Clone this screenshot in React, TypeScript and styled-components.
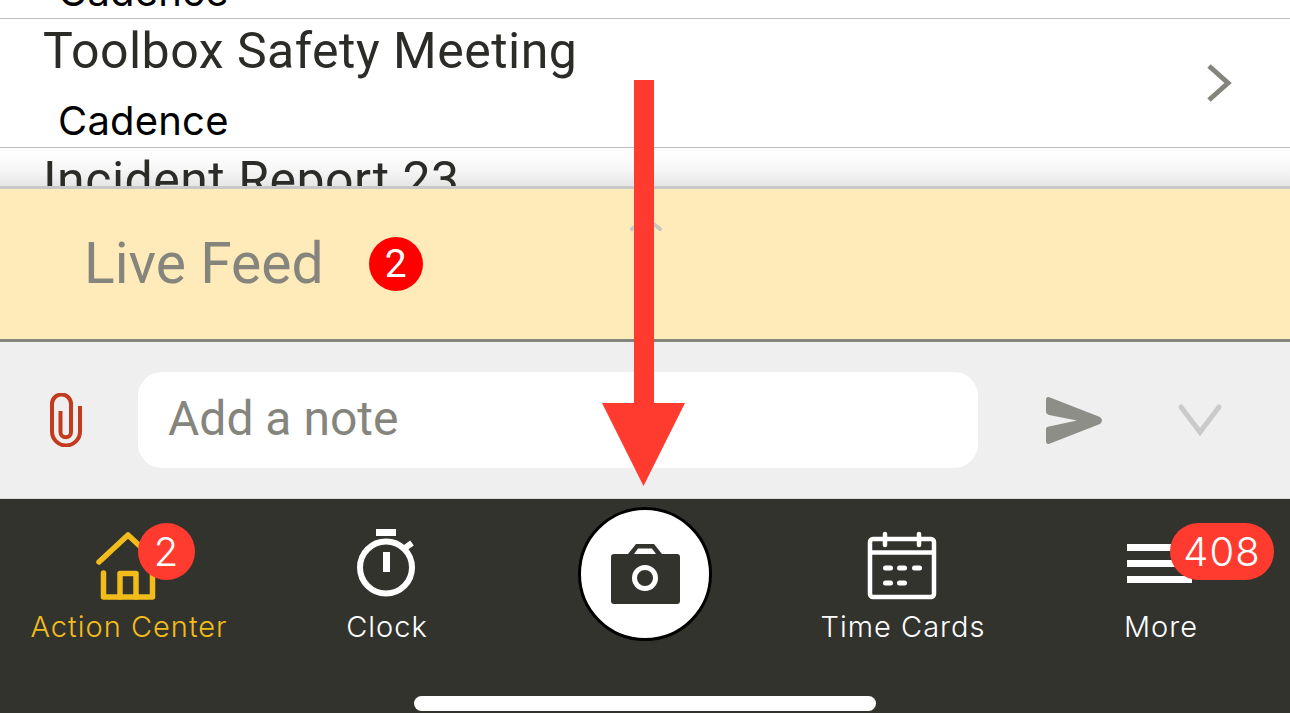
import styled, { createGlobalStyle } from "styled-components";
import type { ReactNode } from "react";

const GlobalStyle = createGlobalStyle`
  html, body {
    margin: 0;
    padding: 0;
    background: #fff;
  }
  * {
    box-sizing: border-box;
  }
`;

const Screen = styled.div`
  position: relative;
  display: flex;
  flex-direction: column;
  width: 1290px;
  height: 713px;
  overflow: hidden;
  font-family: Roboto, sans-serif;
`;

const ListArea = styled.div`
  height: 186px;
  overflow: hidden;
  background: linear-gradient(#fff 150px, #f6f6f6 170px, #e6e6e6 186px);
`;

const ListInner = styled.div`
  margin-top: -110px;
`;

const Row = styled.div`
  position: relative;
  height: 129px;
  padding-left: 43px;
  border-bottom: 1px solid #bdbdbd;
`;

const RowTitle = styled.div`
  height: 62px;
  padding-top: 1px;
  font-size: 50px;
  line-height: 62px;
  letter-spacing: 0.5px;
  color: #2b2b28;
`;

const RowSub = styled.div`
  padding: 17px 0 0 15px;
  font-family: Inter, sans-serif;
  font-size: 40px;
  line-height: 46px;
  letter-spacing: 0.2px;
  color: #000;
`;

const RowChevron = styled.svg`
  position: absolute;
  right: 58px;
  top: 44px;
`;

const FeedBar = styled.div`
  position: relative;
  display: flex;
  align-items: center;
  height: 156px;
  padding: 0 0 0 84px;
  background: #feebb9;
  border-top: 3px solid #c8c8c8;
  border-bottom: 3px solid #85857d;
`;

const FeedTitle = styled.div`
  font-size: 57px;
  line-height: 68px;
  color: #85857d;
`;

const FeedBadge = styled.div`
  display: flex;
  align-items: center;
  justify-content: center;
  width: 54px;
  height: 54px;
  margin-left: 45px;
  border-radius: 50%;
  background: #ff0000;
  color: #fff;
  font-size: 39px;
`;

const FeedHandle = styled.svg`
  position: absolute;
  left: 629px;
  top: 27px;
`;

const NoteBar = styled.div`
  display: flex;
  align-items: center;
  height: 157px;
  padding-left: 50px;
  background: #efefef;
  border-bottom: 1px solid #dcdcdc;
`;

const NoteInput = styled.div`
  display: flex;
  align-items: center;
  width: 840px;
  height: 96px;
  margin: 0 68px 0 56px;
  padding: 0 0 3px 30px;
  border-radius: 24px;
  background: #fff;
  font-size: 48px;
  color: #85857d;
`;

const CloseChevron = styled.svg`
  margin-left: 74px;
`;

const TabBar = styled.div`
  display: flex;
  flex-direction: column;
  flex: 1;
  background: #33332e;
`;

const TabGrid = styled.div`
  display: grid;
  grid-template-columns: repeat(5, 258px);
  padding-top: 8px;
`;

const TabItem = styled.div`
  display: flex;
  flex-direction: column;
  align-items: center;
  padding-top: 18px;
`;

const IconSlot = styled.div`
  position: relative;
  width: 80px;
  height: 80px;
`;

const TabLabel = styled.div<{ $active?: boolean }>`
  margin-top: 5px;
  font-family: Inter, sans-serif;
  font-size: 29px;
  font-weight: 300;
  line-height: 34px;
  letter-spacing: 1px;
  white-space: nowrap;
  color: ${(p) => (p.$active ? "#f2bc1b" : "#fff")};
`;

const CountBadge = styled.div<{ $wide?: boolean }>`
  position: absolute;
  top: -2px;
  left: 49px;
  display: flex;
  align-items: center;
  justify-content: center;
  width: ${(p) => (p.$wide ? "104px" : "57px")};
  height: 57px;
  border-radius: 29px;
  background: #ff3b30;
  color: #fff;
  font-family: Inter, sans-serif;
  font-size: 40px;
  font-weight: 300;
  letter-spacing: 1px;
`;

const CameraButton = styled.div`
  display: flex;
  align-items: center;
  justify-content: center;
  justify-self: center;
  width: 134px;
  height: 134px;
  border-radius: 50%;
  background: #fff;
  border: 3px solid #000;
`;

const HomeIndicator = styled.div`
  align-self: center;
  width: 462px;
  height: 15px;
  margin-top: auto;
  margin-bottom: 2px;
  border-radius: 8px;
  background: #fff;
`;

const ArrowOverlay = styled.svg`
  position: absolute;
  left: 602px;
  top: 80px;
`;

const HouseIcon = () => (
  <svg width="80" height="80" viewBox="0 0 80 80" fill="none" stroke="#f2bc1b" strokeWidth="5.5" strokeLinecap="round" strokeLinejoin="round">
    <path d="M10 37 L39 10 L68 37" />
    <path d="M14.5 48 V72 H63.5 V48" />
    <path d="M31 72 V48.5 H47 V72" />
  </svg>
);

const ClockIcon = () => (
  <svg width="80" height="80" viewBox="0 0 80 80" fill="#fff">
    <circle cx="39" cy="42.5" r="26" fill="none" stroke="#fff" strokeWidth="6" />
    <rect x="29" y="4" width="20" height="7" />
    <rect x="36" y="27" width="7" height="20" />
    <path d="M58 23 L65 18" stroke="#fff" strokeWidth="6" />
  </svg>
);

const CalendarIcon = () => (
  <svg width="80" height="80" viewBox="0 0 80 80" fill="none" stroke="#fff" strokeWidth="4.5">
    <rect x="7" y="14" width="64" height="58" rx="3" />
    <path d="M7 27.5 H71" />
    <path d="M22 9 V20 M56 9 V20" strokeLinecap="round" />
    <g fill="#fff" stroke="none">
      <rect x="20" y="40.5" width="10" height="5" rx="2.5" />
      <rect x="34" y="40.5" width="10" height="5" rx="2.5" />
      <rect x="49" y="40.5" width="10" height="5" rx="2.5" />
      <rect x="20" y="55.5" width="10" height="5" rx="2.5" />
      <rect x="34" y="55.5" width="10" height="5" rx="2.5" />
    </g>
  </svg>
);

const MenuIcon = () => (
  <svg width="80" height="80" viewBox="0 0 80 80" fill="#fff">
    <rect x="6" y="19" width="65" height="7" />
    <rect x="6" y="35" width="65" height="7" />
    <rect x="6" y="51" width="65" height="7" />
  </svg>
);

const CameraIcon = () => (
  <svg width="80" height="80" viewBox="0 0 80 80">
    <path d="M9 20 H23 L31 10 H49 L57 20 H72 Q75 20 75 23 V67 Q75 70 72 70 H9 Q6 70 6 67 V23 Q6 20 9 20 Z" fill="#33332e" />
    <path d="M29 20 L33 14.5 H47 L51 20 Z" fill="#fff" />
    <circle cx="40" cy="44" r="10.5" fill="none" stroke="#fff" strokeWidth="5" />
  </svg>
);

const ClipIcon = () => (
  <svg width="32" height="54" viewBox="0 0 32 54" fill="none" stroke="#c33b1e" strokeWidth="4">
    <path d="M10.5 18 V39 a5.25 5.25 0 0 0 10.5 0 V11 a9.5 9.5 0 0 0 -19 0 V38.5 a14 14 0 0 0 28 0 V13" />
  </svg>
);

const SendIcon = () => (
  <svg width="56" height="49" viewBox="0 0 56 49" fill="#8e8e88">
    <path d="M0 4 Q0 0 4 1.5 L54 21 Q58 24.5 54 28 L4 47.5 Q0 49 0 45 V33 Q0 31 3 30.5 L31 24.5 L3 19 Q0 18 0 16 Z" />
  </svg>
);

function Tab({ label, active, children }: { label: string; active?: boolean; children: ReactNode }) {
  return (
    <TabItem>
      <IconSlot>{children}</IconSlot>
      <TabLabel $active={active}>{label}</TabLabel>
    </TabItem>
  );
}

export default function App() {
  return (
    <Screen>
      <GlobalStyle />
      <ListArea>
        <ListInner>
          <Row>
            <RowTitle />
            <RowSub>Cadence</RowSub>
          </Row>
          <Row>
            <RowTitle>Toolbox Safety Meeting</RowTitle>
            <RowSub>Cadence</RowSub>
            <RowChevron width="26" height="40" viewBox="0 0 26 40" fill="none" stroke="#85857d" strokeWidth="5">
              <path d="M3 3 L22 20 L3 37" />
            </RowChevron>
          </Row>
          <Row>
            <RowTitle>Incident Report 23</RowTitle>
          </Row>
        </ListInner>
      </ListArea>

      <FeedBar>
        <FeedTitle>Live Feed</FeedTitle>
        <FeedBadge>2</FeedBadge>
        <FeedHandle width="34" height="16" viewBox="0 0 34 16" fill="none" stroke="#c8c8c0" strokeWidth="4" strokeLinecap="round">
          <path d="M3 13 L17 2 L31 13" />
        </FeedHandle>
      </FeedBar>

      <NoteBar>
        <ClipIcon />
        <NoteInput>Add a note</NoteInput>
        <SendIcon />
        <CloseChevron width="48" height="34" viewBox="0 0 48 34" fill="none" stroke="#cacaca" strokeWidth="5" strokeLinecap="round">
          <path d="M5 4 L24 29 L43 4" />
        </CloseChevron>
      </NoteBar>

      <TabBar>
        <TabGrid>
          <Tab label="Action Center" active>
            <HouseIcon />
            <CountBadge>2</CountBadge>
          </Tab>
          <Tab label="Clock">
            <ClockIcon />
          </Tab>
          <CameraButton>
            <CameraIcon />
          </CameraButton>
          <Tab label="Time Cards">
            <CalendarIcon />
          </Tab>
          <Tab label="More">
            <MenuIcon />
            <CountBadge $wide>408</CountBadge>
          </Tab>
        </TabGrid>
        <HomeIndicator />
      </TabBar>

      <ArrowOverlay width="84" height="408" viewBox="0 0 84 408" fill="#ff3b30">
        <rect x="32" y="0" width="20" height="324" />
        <path d="M0 323 H83 L41.5 406 Z" />
      </ArrowOverlay>
    </Screen>
  );
}
